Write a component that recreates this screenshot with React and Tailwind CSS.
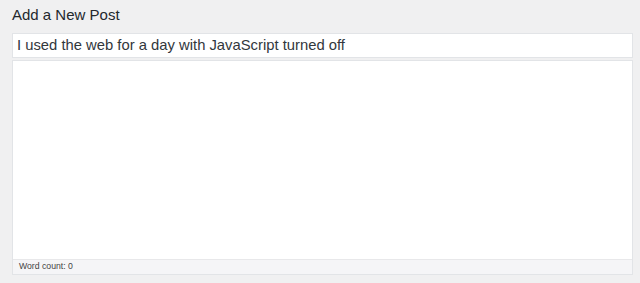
export default function App() {
  return (
    <div className="w-[640px] h-[283px] bg-[#f0f0f1] pl-3 pr-[7px] pt-[5px]" style={{ fontFamily: '"Liberation Sans", Arial, sans-serif' }}>
      <h1 className="text-[15px] leading-5 text-[#23282d] mb-[8px]">Add a New Post</h1>

      {/* title */}
      <div className="h-[25px] bg-white border border-[#e2e4e7] flex items-center px-[4px] text-[14.8px] text-[#32373c]">
        I used the web for a day with JavaScript turned off
      </div>

      {/* editor */}
      <div className="mt-[2px] border border-[#e2e4e7] bg-white flex flex-col">
        <div className="h-[198px] bg-white" />
        <div className="h-[15px] bg-[#f5f5f7] border-t border-[#e8e8ea] flex items-center px-[6px] text-[8.7px] text-[#444]">
          Word count: 0
        </div>
      </div>
    </div>
  )
}
